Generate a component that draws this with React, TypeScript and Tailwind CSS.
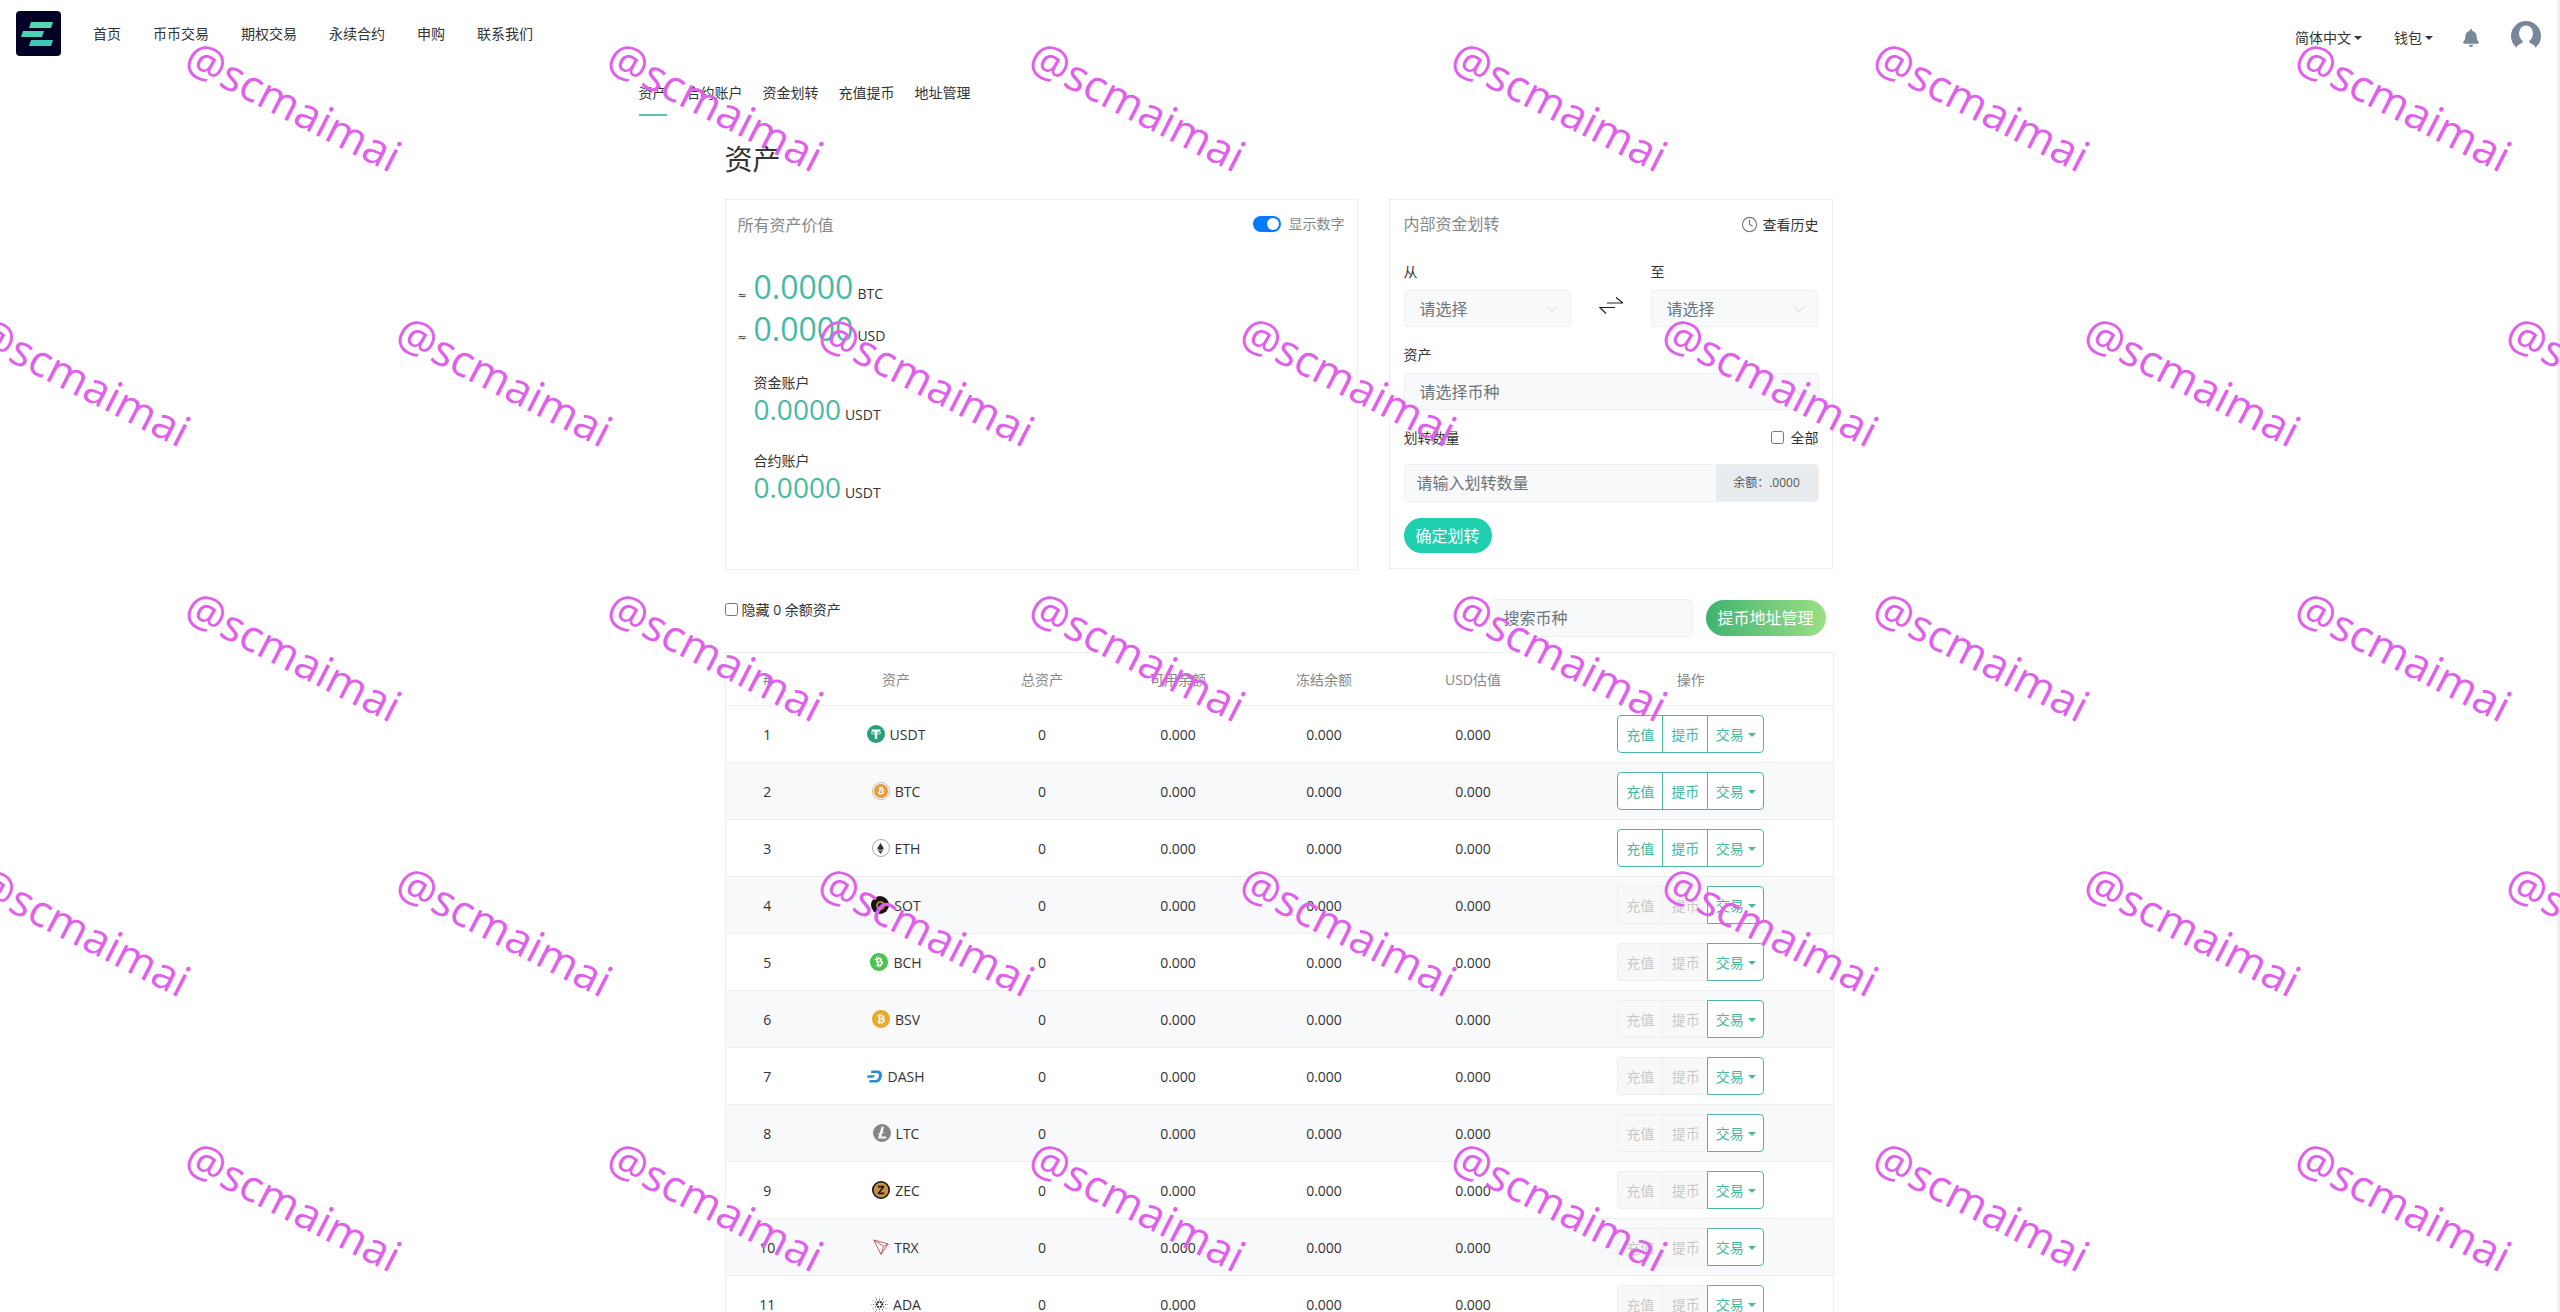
import React from "react";
import { ChevronDown, Clock } from "lucide-react";
import { FaBell } from "react-icons/fa";
import { SiBitcoin, SiBitcoinsv, SiBitcoincash, SiDash, SiLitecoin, SiCardano, SiEthereum } from "react-icons/si";

const Logo = () => (
  <div className="w-[45px] h-[45px] rounded-[4px] bg-[#020024] shrink-0">
    <svg viewBox="0 0 45 45" className="w-[45px] h-[45px]">
      <polygon points="15,11 37,11 35,17 13,17" fill="#52d8ae" />
      <polygon points="7,20 28,20 26,26 5,26" fill="#4bd4b4" />
      <polygon points="15,29 37,29 35,35 13,35" fill="#3fc8b8" />
    </svg>
  </div>
);

const Avatar = () => (
  <svg viewBox="0 0 30 30" className="w-[30px] h-[30px]">
    <circle cx="15" cy="15" r="15" fill="#78879a" />
    <ellipse cx="15" cy="12.5" rx="7" ry="8" fill="#fff" />
    <path d="M11 18 L12 21 L6 25 L6 30 L24 30 L24 25 L18 21 L19 18 Z" fill="#fff" />
  </svg>
);

const Caret = ({ c }: { c: "dark" | "teal" }) => (
  <span
    className={
      c === "dark"
        ? "inline-block w-0 h-0 border-x-[4px] border-t-[4px] border-x-transparent border-t-[#333] ml-[3px]"
        : "inline-block w-0 h-0 border-x-[4px] border-t-[4px] border-x-transparent border-t-[#45b8a0] ml-[4px] mt-[2px]"
    }
  />
);

const Disc = ({ children, cls }: { children: React.ReactNode; cls: string }) => (
  <span className={`w-[18px] h-[18px] rounded-full flex items-center justify-center shrink-0 ${cls}`}>{children}</span>
);

const icons: Record<string, React.ReactNode> = {
  USDT: (
    <svg viewBox="0 0 18 18" className="w-[18px] h-[18px]">
      <circle cx="9" cy="9" r="9" fill="#26a17b" />
      <path d="M4.6 4.4 H13.4 V6.4 H10.2 V14 H7.8 V6.4 H4.6 Z" fill="#fff" />
      <ellipse cx="9" cy="8" rx="5" ry="1.2" fill="none" stroke="#fff" strokeWidth="0.7" />
    </svg>
  ),
  BTC: (
    <Disc cls="border border-[#c9b9a0] bg-white">
      <SiBitcoin className="w-[14px] h-[14px] text-[#e69a3c]" />
    </Disc>
  ),
  ETH: (
    <Disc cls="border border-[#aaa] bg-white">
      <SiEthereum className="w-[11px] h-[11px] text-[#333]" />
    </Disc>
  ),
  SOT: (
    <Disc cls="bg-[#161210]">
      <span className="w-[9px] h-[9px] rounded-full border-2 border-[#a8843c]" />
    </Disc>
  ),
  BCH: <SiBitcoincash className="w-[18px] h-[18px] text-[#4cc24f]" />,
  BSV: <SiBitcoinsv className="w-[18px] h-[18px] text-[#e5ab32]" />,
  DASH: <SiDash className="w-[15px] h-[15px] text-[#2a8fc6]" />,
  LTC: <SiLitecoin className="w-[18px] h-[18px] text-[#858585]" />,
  ZEC: (
    <svg viewBox="0 0 18 18" className="w-[18px] h-[18px]">
      <circle cx="9" cy="9" r="8.2" fill="#c88f48" stroke="#111" strokeWidth="1.6" />
      <path d="M5.8 4.8 H12.2 V6.2 L8 11.6 H12.2 V13.2 H5.8 V11.8 L10 6.4 H5.8 Z" fill="#241a10" />
    </svg>
  ),
  TRX: (
    <svg viewBox="0 0 16 16" className="w-[16px] h-[16px]" fill="none" stroke="#c0505a" strokeWidth="0.9">
      <path d="M0.8 1 L15.2 5 L8 15.4 Z" />
      <path d="M0.8 1 L10.6 7.4 L8 15.4 M10.6 7.4 L15.2 5" />
    </svg>
  ),
  ADA: <SiCardano className="w-[17px] h-[17px] text-[#333]" />,
};

const coins = ["USDT", "BTC", "ETH", "SOT", "BCH", "BSV", "DASH", "LTC", "ZEC", "TRX", "ADA"];

const tealBtn = "flex items-center justify-center h-[38px] border border-[#4db6a6] text-[#45b8a0] bg-white text-[14px]";
const offBtn = "flex items-center justify-center h-[38px] border border-[#eeeeee] text-[#c8c8c8] bg-[#f8f8f8] text-[14px]";

const Actions = ({ on }: { on: boolean }) => (
  <div className="inline-flex align-middle">
    <span className={`${on ? tealBtn : offBtn} w-[46px] rounded-l-[4px]`}>充值</span>
    <span className={`${on ? tealBtn : offBtn} w-[46px] -ml-px ${on ? "" : "border-r-0"}`}>提币</span>
    <span className={`${tealBtn} w-[57px] -ml-px rounded-r-[4px]`}>
      交易
      <Caret c="teal" />
    </span>
  </div>
);

const Field = ({ text, w }: { text: string; w: string }) => (
  <div className={`${w} h-[37px] rounded-[4px] border border-[#eff0f3] bg-[#f8f9fa] flex items-center justify-between pl-[15px] pr-[8px] text-[16px] text-[#6c757d]`}>
    <span>{text}</span>
    <ChevronDown className="w-[20px] h-[20px] text-[#c8ccd0]" strokeWidth={1} />
  </div>
);

const Val = ({ n, u, big }: { n: string; u: string; big?: boolean }) => (
  <div className="flex items-baseline">
    <span className={big ? "text-[32px] leading-[42px] text-[#45bba6]" : "text-[28px] leading-[32px] text-[#45bba6]"}>{n}</span>
    <span className="text-[14px] text-[#333] ml-[4px]">{u}</span>
  </div>
);

const marks: [number, number][] = [];
[105, 380, 655, 930, 1205].forEach((y, r) => {
  const xs = r % 2 === 0 ? [294, 716, 1138, 1560, 1982, 2404] : [83, 505, 927, 1349, 1771, 2193, 2615];
  xs.forEach((x) => marks.push([x, y]));
});

export default function App() {
  return (
    <div className="relative flex h-screen overflow-hidden bg-white text-[14px] text-[#333] font-['Open_Sans','Noto_Sans_CJK_SC',sans-serif]">
      <div className="flex-1 min-w-0">
        <header className="h-[68px] flex items-start justify-between pl-4 pr-4">
          <div className="flex items-center pt-[11px]">
            <Logo />
            <nav className="flex items-center gap-[32px] ml-[32px] -mt-[1px]">
              <span>首页</span>
              <span>币币交易</span>
              <span>期权交易</span>
              <span>永续合约</span>
              <span>申购</span>
              <span>联系我们</span>
            </nav>
          </div>
          <div className="flex items-start">
            <span className="mt-[27px] flex items-center">
              简体中文
              <Caret c="dark" />
            </span>
            <span className="mt-[27px] ml-[32px] flex items-center">
              钱包
              <Caret c="dark" />
            </span>
            <FaBell className="mt-[29px] ml-[30px] w-[16px] h-[18px] text-[#78879a]" />
            <span className="mt-[21px] ml-[32px]">
              <Avatar />
            </span>
          </div>
        </header>

        <div className="mx-auto w-[1280px]">
          <div className="flex gap-[20px] pt-[14px]">
            <span className="pb-[11px] border-b-2 border-[#5fc0b8]">资产</span>
            <span>合约账户</span>
            <span>资金划转</span>
            <span>充值提币</span>
            <span>地址管理</span>
          </div>

          <div className="mx-auto w-[1108px]">
            <h1 className="mt-[26px] text-[28px] leading-[34px] font-normal">资产</h1>

            <div className="mt-[23px] flex justify-between">
              <section className="w-[633px] h-[371px] border border-[#eeeeee] px-[12px] pt-[13px]">
                <div className="flex items-start justify-between">
                  <span className="text-[16px] leading-[24px] text-[#888]">所有资产价值</span>
                  <div className="flex items-center gap-[8px] text-[#888] leading-[21px]">
                    <span className="w-[28px] h-[16px] rounded-full bg-[#007bff] flex items-center justify-end px-[2px]">
                      <span className="w-[12px] h-[12px] rounded-full bg-white" />
                    </span>
                    <span>显示数字</span>
                  </div>
                </div>
                <div className="mt-[29px]">
                  <div className="flex items-baseline">
                    <span className="w-[16px] text-[11px] font-['DejaVu_Sans']">≈</span>
                    <Val big n="0.0000" u="BTC" />
                  </div>
                  <div className="flex items-baseline">
                    <span className="w-[16px] text-[11px] font-['DejaVu_Sans']">≈</span>
                    <Val big n="0.0000" u="USD" />
                  </div>
                </div>
                <div className="pl-[16px] mt-[22px]">
                  <div className="leading-[21px]">资金账户</div>
                  <Val n="0.0000" u="USDT" />
                  <div className="leading-[21px] mt-[25px]">合约账户</div>
                  <Val n="0.0000" u="USDT" />
                </div>
              </section>

              <section className="w-[444px] h-[370px] border border-[#eeeeee] pl-[14px] pr-[13px] pt-[12px]">
                <div className="flex items-center justify-between">
                  <span className="text-[16px] leading-[24px] text-[#888]">内部资金划转</span>
                  <span className="flex items-center gap-[5px]">
                    <Clock className="w-[17px] h-[17px] text-[#777]" strokeWidth={1.6} />
                    查看历史
                  </span>
                </div>
                <div className="mt-[25px] flex">
                  <div>
                    <div className="leading-[21px] mb-[8px]">从</div>
                    <Field text="请选择" w="w-[167px]" />
                  </div>
                  <div className="w-[80px] flex justify-center pt-[36px]">
                    <svg viewBox="0 0 24 17" className="w-[24px] h-[17px]" fill="none" stroke="#222" strokeWidth="1.2">
                      <path d="M8 6 H24 L17 0.5" />
                      <path d="M16 10.5 H0.8 L7 16.5" />
                    </svg>
                  </div>
                  <div>
                    <div className="leading-[21px] mb-[8px]">至</div>
                    <Field text="请选择" w="w-[167px]" />
                  </div>
                </div>
                <div className="leading-[21px] mt-[17px] mb-[8px]">资产</div>
                <Field text="请选择币种" w="w-[415px]" />
                <div className="mt-[17px] flex items-center justify-between w-[415px] leading-[21px]">
                  <span>划转数量</span>
                  <label className="flex items-center gap-[7px]">
                    <input type="checkbox" className="w-[13px] h-[13px]" />
                    全部
                  </label>
                </div>
                <div className="mt-[16px] w-[415px] h-[38px] flex rounded-[4px] overflow-hidden border border-[#eff0f3]">
                  <input placeholder="请输入划转数量" className="flex-1 min-w-0 bg-[#f8f9fa] pl-[12px] text-[16px] outline-none placeholder:text-[#6c757d]" />
                  <span className="w-[102px] bg-[#e9ecef] flex items-center justify-center text-[12px] text-[#555]">余额：.0000</span>
                </div>
                <button className="mt-[16px] w-[88px] h-[35px] rounded-full bg-[#20cfb0] text-white text-[16px]">确定划转</button>
              </section>
            </div>

            <div className="mt-[29px] flex items-start justify-between">
              <label className="flex items-center gap-[4px]">
                <input type="checkbox" className="w-[13px] h-[13px]" />
                隐藏 0 余额资产
              </label>
              <div className="flex items-center gap-[13px] mr-[7px]">
                <input placeholder="搜索币种" className="w-[204px] h-[38px] rounded-[6px] border border-[#eff0f3] bg-[#f8f9fa] pl-[14px] text-[16px] outline-none placeholder:text-[#6c757d]" />
                <button className="w-[120px] h-[36px] rounded-full bg-gradient-to-r from-[#3cb371] to-[#9adf85] text-white text-[16px]">提币地址管理</button>
              </div>
            </div>

            <table className="mt-[15px] w-[1108px] table-fixed border-collapse border border-[#eeeeee] text-center">
              <colgroup>
                <col className="w-[84px]" />
                <col className="w-[174px]" />
                <col className="w-[118px]" />
                <col className="w-[154px]" />
                <col className="w-[138px]" />
                <col className="w-[160px]" />
                <col className="w-[280px]" />
              </colgroup>
              <thead>
                <tr className="h-[53px] text-[#888] border-b border-[#eeeeee]">
                  <th className="font-normal">#</th>
                  <th className="font-normal">资产</th>
                  <th className="font-normal">总资产</th>
                  <th className="font-normal">可用余额</th>
                  <th className="font-normal">冻结余额</th>
                  <th className="font-normal">USD估值</th>
                  <th className="font-normal pr-[4px]">操作</th>
                </tr>
              </thead>
              <tbody>
                {coins.map((c, i) => (
                  <tr key={c} className={`h-[57px] border-b border-[#eeeeee] ${i % 2 === 1 ? "bg-[#f8f9fb]" : "bg-white"}`}>
                    <td>{i + 1}</td>
                    <td>
                      <div className="flex items-center justify-center gap-[5px]">
                        {icons[c]}
                        <span>{c}</span>
                      </div>
                    </td>
                    <td>0</td>
                    <td>0.000</td>
                    <td>0.000</td>
                    <td>0.000</td>
                    <td className="pr-[4px]">
                      <Actions on={i < 3} />
                    </td>
                  </tr>
                ))}
              </tbody>
            </table>
          </div>
        </div>
      </div>
      <div className="w-[3px] shrink-0 bg-[#eeeeee]" />

      <div className="absolute inset-0 overflow-hidden pointer-events-none">
        {marks.map(([x, y]) => (
          <span
            key={`${x}-${y}`}
            className="absolute -translate-x-1/2 -translate-y-1/2 rotate-[27deg] whitespace-nowrap text-[44px] leading-none text-[#e060ec]"
            style={{ left: x, top: y }}
          >
            @scmaimai
          </span>
        ))}
      </div>
    </div>
  );
}
